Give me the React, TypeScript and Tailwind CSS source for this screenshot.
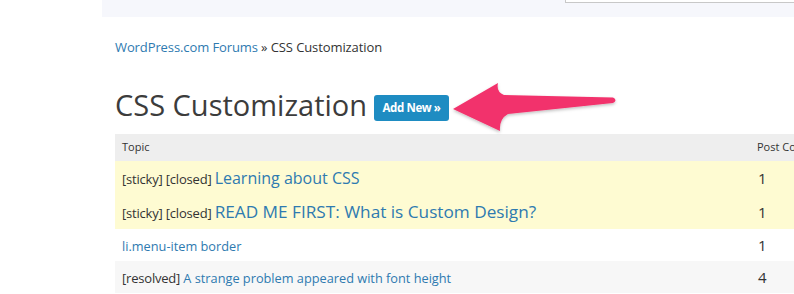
import React from 'react';

type Topic = {
  labels?: string;
  title: string;
  count: number;
  size: string;
  bg: string;
  h: string;
};

const topics: Topic[] = [
  { labels: '[sticky] [closed]', title: 'Learning about CSS', count: 1, size: 'text-[16px]', bg: 'bg-[#fefbd2]', h: 'h-[34px]' },
  { labels: '[sticky] [closed]', title: 'READ ME FIRST: What is Custom Design?', count: 1, size: 'text-[17.2px]', bg: 'bg-[#fefbd2]', h: 'h-[34px]' },
  { title: 'li.menu-item border', count: 1, size: 'text-[12.75px]', bg: 'bg-white', h: 'h-[32px]' },
  { labels: '[resolved]', title: 'A strange problem appeared with font height', count: 4, size: 'text-[12.75px]', bg: 'bg-[#f7f7f7]', h: 'h-[32px]' },
];

const Arrow: React.FC = () => (
  <svg
    className="absolute left-[448px] top-[78px]"
    width="176"
    height="60"
    viewBox="448 78 176 60"
  >
    <defs>
      <filter id="sh" x="-10%" y="-20%" width="120%" height="150%">
        <feDropShadow dx="0" dy="1.5" stdDeviation="1.5" floodColor="#000" floodOpacity="0.25" />
      </filter>
    </defs>
    <path
      d="M453 109 L498 83 Q496 92 504 95 L613 97.5 Q618 100 613 103 L508 114 Q499 119 500 131 Z"
      fill="#f2336c"
      filter="url(#sh)"
    />
  </svg>
);

const App: React.FC = () => {
  return (
    <div className="relative w-[794px] h-[294px] overflow-hidden bg-white font-['Open_Sans',sans-serif] text-[#333]">
      {/* top bar */}
      <div className="ml-[102px] h-[17px] bg-[#f6f7fc] flex justify-end">
        <div className="w-[229px] h-[3px] bg-white border-l border-b border-[#c8c8c8]" />
      </div>

      <div className="pl-[115px]">
        <div className="mt-[21px] text-[13px] leading-[18px] tracking-[-0.1px]">
          <a className="text-[#2e7ab0]">WordPress.com Forums</a>
          <span> » CSS Customization</span>
        </div>

        <div className="mt-[31px] flex items-start">
          <h1 className="text-[29px] leading-[36px] text-[#3c3c3c] font-normal">CSS Customization</h1>
          <button className="ml-[7px] mt-[8px] h-[26px] w-[75px] rounded-[3px] bg-[#1e8cc2] text-white text-[11.5px] font-bold tracking-[-0.4px] whitespace-nowrap">
            Add New »
          </button>
        </div>

        <div className="mt-[11px] w-[720px]">
          <div className="flex h-[27px] items-center bg-[#eeeeee] text-[11px]">
            <div className="w-[635px] pl-[7px]">Topic</div>
            <div className="pl-[7px] whitespace-nowrap">Post Count</div>
          </div>
          {topics.map((t) => (
            <div key={t.title} className={`flex items-center ${t.h} ${t.bg}`}>
              <div className="w-[635px] pl-[7px] whitespace-nowrap">
                {t.labels && <span className="text-[13px] tracking-[-0.2px]">{t.labels} </span>}
                <a className={`text-[#2e7ab0] ${t.size}`}>{t.title}</a>
              </div>
              <div className="pl-[8px] text-[15px]">{t.count}</div>
            </div>
          ))}
        </div>
      </div>

      <Arrow />
    </div>
  );
};

export default App;
